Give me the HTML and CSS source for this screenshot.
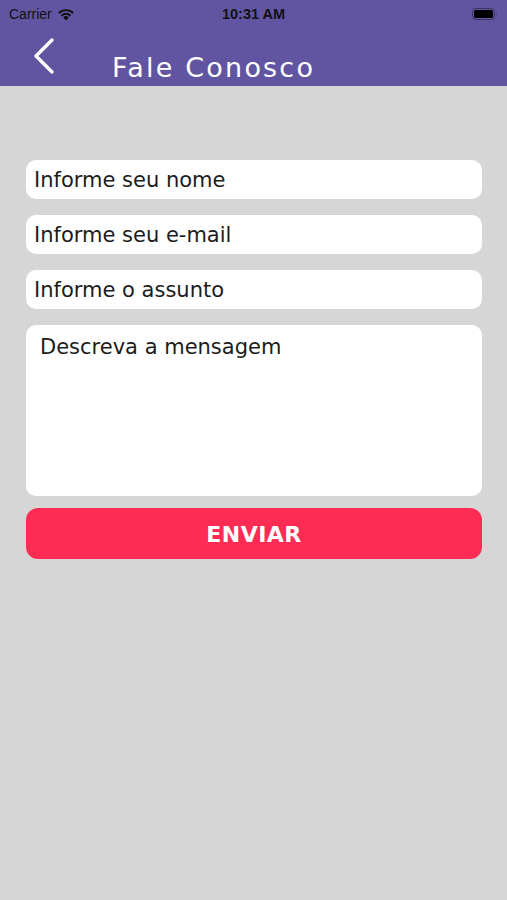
FILE: index.html
```html
<!DOCTYPE html>
<html lang="pt">
<head>
<meta charset="utf-8">
<link rel="stylesheet" href="styles.css">
<title>Fale Conosco</title>
</head>
<body>
<header class="header">
  <div class="status">
    <div class="status-left">
      <span class="carrier">Carrier</span>
      <svg class="wifi" width="18" height="13" viewBox="0 0 18 13"><path d="M9 12.5 L6.2 9.4 A4 4 0 0 1 11.8 9.4 Z" fill="#111"/><path d="M3.8 7 A7.4 7.4 0 0 1 14.2 7 L12.9 8.4 A5.6 5.6 0 0 0 5.1 8.4 Z" fill="#111"/><path d="M1.2 4.3 A11.2 11.2 0 0 1 16.8 4.3 L15.5 5.7 A9.4 9.4 0 0 0 2.5 5.7 Z" fill="#111"/></svg>
    </div>
    <span class="time">10:31 AM</span>
    <div class="status-right">
      <svg class="battery" width="26" height="12" viewBox="0 0 26 12"><rect x="0.5" y="0.5" width="22" height="11" rx="3" fill="none" stroke="#3a3560" stroke-width="1"/><rect x="2" y="2" width="19" height="8" rx="1.6" fill="#000"/><path d="M24 4 Q25.5 6 24 8 Z" fill="#3a3560"/></svg>
    </div>
  </div>
  <div class="nav">
    <svg class="back" width="26" height="38" viewBox="0 0 26 38"><path d="M21 3 L5 19 L21 35" fill="none" stroke="#fff" stroke-width="3.4" stroke-linecap="round" stroke-linejoin="round"/></svg>
    <h1 class="title">Fale Conosco</h1>
  </div>
</header>
<main class="form">
  <div class="field">Informe seu nome</div>
  <div class="field">Informe seu e-mail</div>
  <div class="field">Informe o assunto</div>
  <div class="field area">Descreva a mensagem</div>
  <button class="send">ENVIAR</button>
</main>
</body>
</html>
```
FILE: styles.css
```css
* { box-sizing: border-box; }
html, body { margin: 0; padding: 0; }
body {
  width: 507px;
  height: 900px;
  background: #d6d6d6;
  font-family: "DejaVu Sans", sans-serif;
  overflow: hidden;
}
.header {
  background: #6155a1;
  height: 86px;
}
.status {
  height: 28px;
  display: flex;
  align-items: center;
  justify-content: space-between;
  padding: 0 9px 0 9px;
  font-family: "Liberation Sans", sans-serif;
  color: #111;
}
.status-left { display: flex; align-items: center; gap: 5px; width: 120px; }
.carrier { font-size: 14px; }
.time { font-size: 14.5px; font-weight: bold; }
.status-right { width: 120px; display: flex; justify-content: flex-end; }
.nav {
  display: flex;
  align-items: flex-start;
  padding-left: 31px;
}
.back { margin-top: 9px; }
.title {
  margin: 22px 0 0 55px;
  font-family: "DejaVu Sans", sans-serif;
  font-weight: normal;
  font-size: 27px;
  letter-spacing: 2.2px;
  color: #fff;
  line-height: 36px;
}
.form {
  padding: 74px 25px 0 26px;
  display: flex;
  flex-direction: column;
  gap: 16px;
}
.field {
  background: #fff;
  border-radius: 10px;
  height: 39px;
  padding: 0 8px;
  display: flex;
  align-items: center;
  font-size: 21px;
  color: #1c1c1c;
}
.area {
  height: 171px;
  align-items: flex-start;
  padding: 10px 14px;
}
.send {
  margin-top: -4px;
  height: 51px;
  border: none;
  border-radius: 12px;
  background: #fe2c55;
  color: #fff;
  font-family: "DejaVu Sans", sans-serif;
  font-weight: bold;
  font-size: 22px;
  letter-spacing: 0.5px;
  padding-top: 2px;
}
```
